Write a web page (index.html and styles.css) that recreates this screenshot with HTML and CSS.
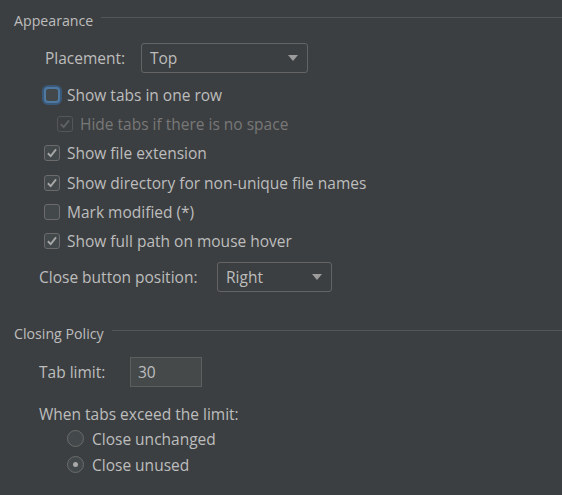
FILE: index.html
```html
<!DOCTYPE html>
<html>
<head>
<meta charset="utf-8">
<link rel="stylesheet" href="styles.css">
</head>
<body>
<div class="panel">
  <div class="title-row"><span class="title">Appearance</span><span class="line"></span></div>

  <div class="field-row placement">
    <span class="label">Placement:</span>
    <div class="combo combo-top"><span>Top</span><span class="arrow"></span></div>
  </div>

  <div class="check-row">
    <span class="cb focused"></span><span class="text">Show tabs in one row</span>
  </div>
  <div class="check-row sub disabled">
    <span class="cb checked"><svg viewBox="0 0 16 16"><path d="M3.3 8.3 L6.5 11.5 L12.6 3.9"/></svg></span><span class="text">Hide tabs if there is no space</span>
  </div>
  <div class="check-row">
    <span class="cb checked"><svg viewBox="0 0 16 16"><path d="M3.3 8.3 L6.5 11.5 L12.6 3.9"/></svg></span><span class="text">Show file extension</span>
  </div>
  <div class="check-row">
    <span class="cb checked"><svg viewBox="0 0 16 16"><path d="M3.3 8.3 L6.5 11.5 L12.6 3.9"/></svg></span><span class="text">Show directory for non-unique file names</span>
  </div>
  <div class="check-row">
    <span class="cb"></span><span class="text">Mark modified (*)</span>
  </div>
  <div class="check-row">
    <span class="cb checked"><svg viewBox="0 0 16 16"><path d="M3.3 8.3 L6.5 11.5 L12.6 3.9"/></svg></span><span class="text">Show full path on mouse hover</span>
  </div>

  <div class="field-row close-pos">
    <span class="label">Close button position:</span>
    <div class="combo combo-right"><span>Right</span><span class="arrow"></span></div>
  </div>

  <div class="title-row policy"><span class="title">Closing Policy</span><span class="line"></span></div>

  <div class="field-row tab-limit">
    <span class="label">Tab limit:</span>
    <div class="input">30</div>
  </div>

  <div class="text-row">When tabs exceed the limit:</div>
  <div class="radio-row"><span class="radio"></span><span class="text">Close unchanged</span></div>
  <div class="radio-row"><span class="radio selected"></span><span class="text">Close unused</span></div>
</div>
</body>
</html>
```
FILE: styles.css
```css
html, body {
  margin: 0;
  padding: 0;
  background: #3c3f41;
}
body {
  width: 562px;
  height: 495px;
  overflow: hidden;
  font-family: "Open Sans", "Noto Sans", sans-serif;
  font-size: 15.5px;
  color: #bdbdbd;
}
.panel {
  display: flex;
  flex-direction: column;
  padding-top: 8px;
}
.title-row {
  display: flex;
  align-items: center;
  height: 24px;
  padding-left: 14px;
}
.title {
  font-size: 14.2px;
  margin-right: 8px;
}
.line {
  flex: 1;
  height: 1px;
  background: #535557;
  margin-bottom: 6px;
}
.field-row {
  display: flex;
  align-items: center;
  height: 30px;
}
.placement {
  margin-top: 11px;
  padding-left: 45px;
}
.placement .label { width: 96px; }
.combo {
  box-sizing: border-box;
  height: 30px;
  border: 1px solid #646464;
  border-radius: 3px;
  display: flex;
  align-items: center;
  justify-content: space-between;
  padding: 0 9px 0 8px;
}
.combo-top { width: 167px; }
.combo-right { width: 115px; }
.arrow {
  width: 0;
  height: 0;
  border-left: 5px solid transparent;
  border-right: 5px solid transparent;
  border-top: 6px solid #9c9c9c;
}
.check-row {
  display: flex;
  align-items: center;
  height: 29.3px;
  padding-left: 44px;
}
.placement + .check-row { margin-top: 7px; }
.check-row.sub { padding-left: 57px; }
.cb {
  box-sizing: border-box;
  width: 16px;
  height: 16px;
  border: 1px solid #6b6b6b;
  border-radius: 3px;
  background: #43494a;
  margin-right: 7px;
  display: flex;
  flex: none;
}
.cb svg {
  width: 14px;
  height: 14px;
  fill: none;
  stroke: #a9a9a9;
  stroke-width: 2.1;
}
.cb.focused {
  border: 2px solid #4f79a3;
  border-radius: 4px;
  box-shadow: 0 0 0 2px #3a5878;
}
.disabled .cb {
  border-color: #545657;
  background: #3c3f41;
}
.disabled .cb svg { stroke: #5f6163; }
.disabled .text { color: #787878; }
.close-pos {
  margin-top: 6px;
  padding-left: 39px;
}
.close-pos .label { width: 178px; }
.policy { margin-top: 30px; }
.tab-limit {
  margin-top: 11px;
  padding-left: 39px;
}
.tab-limit .label { width: 91px; }
.input {
  box-sizing: border-box;
  width: 72px;
  height: 30px;
  background: #45494a;
  border: 1px solid #5e6060;
  display: flex;
  align-items: center;
  padding-left: 7px;
}
.text-row {
  margin-top: 15px;
  height: 24px;
  line-height: 24px;
  padding-left: 39px;
}
.radio-row {
  display: flex;
  align-items: center;
  height: 26px;
  padding-left: 67px;
}
.radio {
  box-sizing: border-box;
  width: 17px;
  height: 17px;
  border: 1px solid #6b6b6b;
  border-radius: 50%;
  background: #43494a;
  margin-right: 8px;
  display: flex;
  align-items: center;
  justify-content: center;
  flex: none;
}
.radio.selected::after {
  content: "";
  width: 5px;
  height: 5px;
  border-radius: 50%;
  background: #a9a9a9;
}
```
